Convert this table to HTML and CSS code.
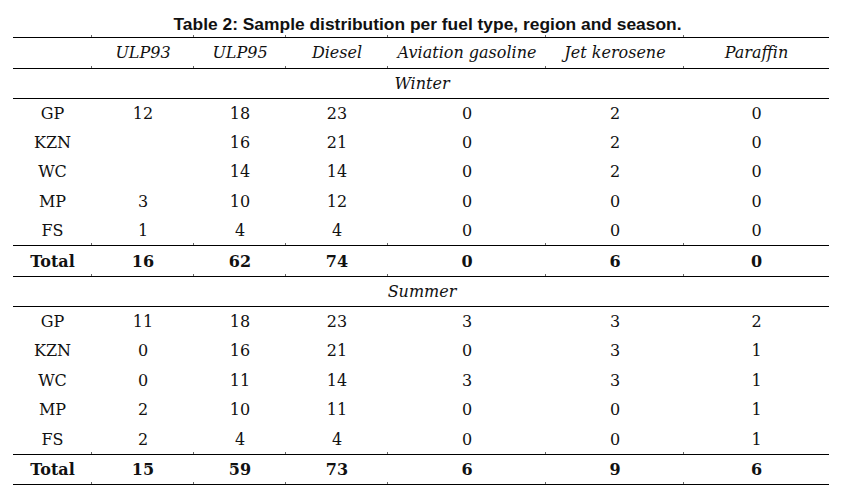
FILE: index.html
```html
<!DOCTYPE html>
<html lang="en">
<head>
<meta charset="utf-8">
<title>Table 2</title>
<link rel="stylesheet" href="styles.css">
</head>
<body>
<div class="page">
  <div class="caption">Table 2: Sample distribution per fuel type, region and season.</div>
  <table class="tb">
    <thead>
      <tr class="head ruled">
        <th></th>
        <th>ULP93</th>
        <th>ULP95</th>
        <th>Diesel</th>
        <th>Aviation gasoline</th>
        <th>Jet kerosene</th>
        <th>Paraffin</th>
      </tr>
    </thead>
    <tbody>
      <tr class="season ruled"><td colspan="7">Winter</td></tr>
      <tr class="data"><td>GP</td><td>12</td><td>18</td><td>23</td><td>0</td><td>2</td><td>0</td></tr>
      <tr class="data"><td>KZN</td><td></td><td>16</td><td>21</td><td>0</td><td>2</td><td>0</td></tr>
      <tr class="data"><td>WC</td><td></td><td>14</td><td>14</td><td>0</td><td>2</td><td>0</td></tr>
      <tr class="data"><td>MP</td><td>3</td><td>10</td><td>12</td><td>0</td><td>0</td><td>0</td></tr>
      <tr class="data ruled"><td>FS</td><td>1</td><td>4</td><td>4</td><td>0</td><td>0</td><td>0</td></tr>
      <tr class="total ruled"><td>Total</td><td>16</td><td>62</td><td>74</td><td>0</td><td>6</td><td>0</td></tr>
      <tr class="season ruled"><td colspan="7">Summer</td></tr>
      <tr class="data"><td>GP</td><td>11</td><td>18</td><td>23</td><td>3</td><td>3</td><td>2</td></tr>
      <tr class="data"><td>KZN</td><td>0</td><td>16</td><td>21</td><td>0</td><td>3</td><td>1</td></tr>
      <tr class="data"><td>WC</td><td>0</td><td>11</td><td>14</td><td>3</td><td>3</td><td>1</td></tr>
      <tr class="data"><td>MP</td><td>2</td><td>10</td><td>11</td><td>0</td><td>0</td><td>1</td></tr>
      <tr class="data ruled"><td>FS</td><td>2</td><td>4</td><td>4</td><td>0</td><td>0</td><td>1</td></tr>
      <tr class="total ruled"><td>Total</td><td>15</td><td>59</td><td>73</td><td>6</td><td>9</td><td>6</td></tr>
    </tbody>
  </table>
</div>
</body>
</html>
```

FILE: styles.css
```css
html, body {
  margin: 0;
  padding: 0;
  background: #ffffff;
}

.page {
  width: 867px;
  height: 497px;
  padding-top: 15px;
  box-sizing: border-box;
  color: #000;
}

.caption {
  font-family: "Liberation Sans", Arial, sans-serif;
  font-weight: bold;
  font-size: 17.4px;
  line-height: 19px;
  height: 22px;
  text-align: center;
  padding-right: 12px;
  color: #111;
}

.tb {
  margin-left: 13px;
  width: 816px;
  border-collapse: collapse;
  table-layout: fixed;
  font-family: "DejaVu Serif", "Liberation Serif", serif;
  font-size: 16px;
  color: #111;
  border-top: 1px solid #000;
}

.tb th,
.tb td {
  padding: 0;
  text-align: center;
  vertical-align: middle;
  position: relative;
  white-space: nowrap;
}

.tb th:nth-child(1) { width: 79px; }
.tb th:nth-child(2) { width: 102px; }
.tb th:nth-child(3) { width: 92px; }
.tb th:nth-child(4) { width: 102px; }
.tb th:nth-child(5) { width: 158px; }
.tb th:nth-child(6) { width: 138px; }
.tb th:nth-child(7) { width: 145px; }

.head th {
  font-weight: normal;
  font-style: italic;
  height: 29.5px;
}

.ruled td,
.ruled th {
  border-bottom: 1px solid #000;
}

.season td {
  font-style: italic;
  height: 29px;
  padding-left: 2px;
}

.data td {
  height: 29.4px;
}

.total td {
  font-weight: bold;
  height: 29.3px;
}

/* faint cell-boundary ticks above each rule */
.ruled th:not(:first-child)::before,
.ruled td:not(:first-child)::before {
  content: "";
  position: absolute;
  left: -1px;
  bottom: 0;
  width: 1px;
  height: 2px;
  background: #666;
}

.head th:not(:first-child)::after {
  content: "";
  position: absolute;
  left: -1px;
  top: -3px;
  width: 1px;
  height: 2px;
  background: #666;
}

.season td::before {
  display: none;
}
```
